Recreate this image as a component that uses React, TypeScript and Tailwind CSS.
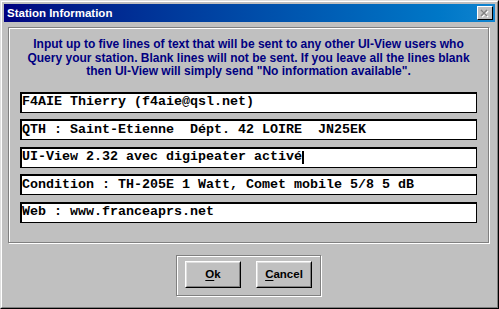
import React from "react";

const lines = [
  "F4AIE Thierry (f4aie@qsl.net)",
  "QTH : Saint-Etienne  Dépt. 42 LOIRE  JN25EK",
  "UI-View 2.32 avec digipeater activé",
  "Condition : TH-205E 1 Watt, Comet mobile 5/8 5 dB",
  "Web : www.franceaprs.net",
];

function Field({ value, caret }: { value: string; caret?: boolean }) {
  return (
    <div className="h-[21px] bg-white border border-black shadow-[inset_1px_1px_0_#000] flex items-center pl-[1px] overflow-hidden">
      <span
        className="whitespace-pre text-black font-bold text-[13.33px] leading-[16px]"
        style={{ fontFamily: '"Liberation Mono", monospace' }}
      >
        {value}
      </span>
      {caret && <span className="inline-block w-[2px] h-[13px] bg-black" />}
    </div>
  );
}

function Button({ children }: { children: React.ReactNode }) {
  return (
    <div className="w-[56px] h-[27px] border border-t-white border-l-white border-r-black border-b-black">
      <div className="w-full h-full border border-t-[#dfdfdf] border-l-[#dfdfdf] border-r-[#808080] border-b-[#808080] bg-[#c0c0c0] flex items-center justify-center">
        <span className="text-black font-bold text-[11.5px]">{children}</span>
      </div>
    </div>
  );
}

export default function App() {
  return (
    <div
      className="w-[499px] h-[309px] bg-[#c0c0c0] border border-t-[#dfdfdf] border-l-[#dfdfdf] border-r-black border-b-black"
      style={{ fontFamily: '"Liberation Sans", Arial, sans-serif' }}
    >
      <div className="w-full h-full border border-t-white border-l-white border-r-[#808080] border-b-[#808080] p-[2px] flex flex-col">
        {/* Title bar */}
        <div className="h-[18px] bg-gradient-to-r from-[#000080] to-[#1084d0] flex items-center justify-between pl-[3px] pr-[2px]">
          <span className="text-white font-bold text-[11.5px] leading-[18px]">Station Information</span>
          <div className="w-[16px] h-[14px] border border-t-white border-l-white border-r-black border-b-black bg-[#c0c0c0] flex items-center justify-center">
            <svg width="10" height="9" viewBox="0 0 10 9">
              <path d="M2 2 L8 8 M8 2 L2 8" stroke="#ffffff" strokeWidth="1.5" />
              <path d="M1 1 L7 7 M7 1 L1 7" stroke="#808080" strokeWidth="1.5" />
            </svg>
          </div>
        </div>

        {/* Body */}
        <div className="pt-[5px] pl-[4px] flex flex-col">
          <div className="w-[481px] h-[216px] border border-[#808080] shadow-[inset_1px_1px_0_#fff,1px_1px_0_#fff] flex flex-col pt-[10px]">
            <div className="text-[#000080] font-bold text-[12px] leading-[13.5px] text-center">
              <div>Input up to five lines of text that will be sent to any other UI-View users who</div>
              <div>Query your station. Blank lines will not be sent. If you leave all the lines blank</div>
              <div>then UI-View will simply send "No information available".</div>
            </div>
            <div className="mt-[13px] mx-[11px] flex flex-col gap-[6.5px]">
              {lines.map((l, i) => (
                <Field key={i} value={l} caret={i === 2} />
              ))}
            </div>
          </div>
        </div>

        {/* Buttons */}
        <div className="mt-[12px] flex justify-center pr-[2px]">
          <div className="w-[145px] h-[41px] border border-[#808080] shadow-[inset_1px_1px_0_#fff,1px_1px_0_#fff] flex gap-[15px] pl-[8px] pt-[5px]">
            <Button>
              <span className="underline underline-offset-2">O</span>k
            </Button>
            <Button>
              <span className="underline underline-offset-2">C</span>ancel
            </Button>
          </div>
        </div>
      </div>
    </div>
  );
}
